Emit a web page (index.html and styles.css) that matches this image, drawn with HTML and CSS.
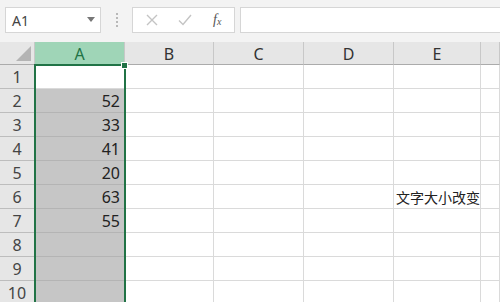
FILE: index.html
```html
<!DOCTYPE html>
<html lang="zh">
<head>
    <meta charset="UTF-8">
    <title>工作表</title>
    <link rel="stylesheet" href="styles.css">
</head>
<body>
    <div class="toolbar">
        <div class="name-box">
            <span>A1</span>
            <svg class="caret" width="8" height="5" viewBox="0 0 8 5"><path d="M0 0h8L4 5z" fill="#777"/></svg>
        </div>
        <div class="grip">
            <span></span><span></span><span></span><span></span>
        </div>
        <div class="fx-buttons">
            <svg width="12" height="12" viewBox="0 0 12 12"><path d="M1 1L11 11M11 1L1 11" stroke="#c4c4c4" stroke-width="1.4"/></svg>
            <svg width="14" height="12" viewBox="0 0 14 12"><path d="M1 6.5L5 10.5L13 1" stroke="#c4c4c4" stroke-width="1.4" fill="none"/></svg>
            <span class="fx">f<sub>x</sub></span>
        </div>
        <div class="formula"></div>
    </div>

    <div class="sheet">
        <div class="corner"><span class="tri"></span></div>
        <div class="col-head active">A</div>
        <div class="col-head">B</div>
        <div class="col-head">C</div>
        <div class="col-head">D</div>
        <div class="col-head">E</div>
        <div class="col-head"></div>

        <div class="row-head">1</div><div class="cell"></div><div class="cell"></div><div class="cell"></div><div class="cell"></div><div class="cell"></div><div class="cell"></div>
        <div class="row-head">2</div><div class="cell sel">52</div><div class="cell"></div><div class="cell"></div><div class="cell"></div><div class="cell"></div><div class="cell"></div>
        <div class="row-head">3</div><div class="cell sel">33</div><div class="cell"></div><div class="cell"></div><div class="cell"></div><div class="cell"></div><div class="cell"></div>
        <div class="row-head">4</div><div class="cell sel">41</div><div class="cell"></div><div class="cell"></div><div class="cell"></div><div class="cell"></div><div class="cell"></div>
        <div class="row-head">5</div><div class="cell sel">20</div><div class="cell"></div><div class="cell"></div><div class="cell"></div><div class="cell"></div><div class="cell"></div>
        <div class="row-head">6</div><div class="cell sel">63</div><div class="cell"></div><div class="cell"></div><div class="cell"></div><div class="cell text">文字大小改变</div><div class="cell"></div>
        <div class="row-head">7</div><div class="cell sel">55</div><div class="cell"></div><div class="cell"></div><div class="cell"></div><div class="cell"></div><div class="cell"></div>
        <div class="row-head">8</div><div class="cell sel"></div><div class="cell"></div><div class="cell"></div><div class="cell"></div><div class="cell"></div><div class="cell"></div>
        <div class="row-head">9</div><div class="cell sel"></div><div class="cell"></div><div class="cell"></div><div class="cell"></div><div class="cell"></div><div class="cell"></div>
        <div class="row-head">10</div><div class="cell sel"></div><div class="cell"></div><div class="cell"></div><div class="cell"></div><div class="cell"></div><div class="cell"></div>

        <!-- 选中列的边框 -->
        <div class="selection"><span class="handle"></span></div>
    </div>
</body>
</html>
```

FILE: styles.css
```css
body {
    margin: 0;
    font-family: "Noto Sans", "Noto Sans CJK SC", sans-serif;
    background-color: #f3f3f3;
    overflow: hidden;
    width: 500px;
    height: 302px;
}
.toolbar {
    display: flex;
    align-items: center;
    height: 42px;
    padding: 0 0 2px 5px;
    box-sizing: border-box;
}
.name-box {
    width: 96px;
    height: 26px;
    box-sizing: border-box;
    background-color: #fff;
    border: 1px solid #d6d6d6;
    display: flex;
    align-items: center;
    justify-content: space-between;
    padding: 0 5px 0 6px;
    font-size: 14px;
    color: #444;
}
.caret {
    margin-bottom: 2px;
}
.grip {
    width: 31px;
    display: flex;
    flex-direction: column;
    align-items: center;
    gap: 2px;
}
.grip span {
    width: 2px;
    height: 2px;
    background-color: #b8b8b8;
}
.fx-buttons {
    width: 103px;
    height: 26px;
    box-sizing: border-box;
    background-color: #fff;
    border: 1px solid #d6d6d6;
    display: flex;
    align-items: center;
    padding: 0 0 0 13px;
    gap: 20px;
}
.fx {
    font-family: "Liberation Serif", serif;
    font-style: italic;
    font-size: 14px;
    color: #555;
    margin-left: 1px;
}
.fx sub {
    font-size: 10px;
    vertical-align: -1px;
}
.formula {
    flex: 1;
    height: 26px;
    margin-left: 5px;
    background-color: #fff;
    border: 1px solid #d6d6d6;
    border-right: none;
    box-sizing: border-box;
}
.sheet {
    position: relative;
    display: grid;
    grid-template-columns: 35px 90px 89px 90px 90px 87px 1fr;
    grid-template-rows: 23px repeat(10, 24px);
    background-color: #fff;
}
.corner {
    background-color: #e6e6e6;
    border-bottom: 1px solid #ababab;
    border-right: 1px solid #c8c8c8;
    position: relative;
}
.tri {
    position: absolute;
    right: 3px;
    bottom: 3px;
    width: 0;
    height: 0;
    border-left: 15px solid transparent;
    border-bottom: 15px solid #b4b4b4;
}
.col-head {
    background-color: #e6e6e6;
    border-bottom: 1px solid #ababab;
    border-right: 1px solid #c8c8c8;
    display: flex;
    align-items: center;
    justify-content: center;
    font-size: 16px;
    color: #333;
    padding-top: 2px;
}
.col-head.active {
    background-color: #9fd5b7;
    color: #217346;
    border-bottom-color: #217346;
}
.row-head {
    background-color: #e6e6e6;
    border-bottom: 1px solid #bdbdbd;
    border-right: 1px solid #ababab;
    display: flex;
    align-items: center;
    justify-content: center;
    font-size: 16px;
    color: #444;
}
.cell {
    border-bottom: 1px solid #dadada;
    border-right: 1px solid #dadada;
    font-size: 16px;
    color: #222;
    display: flex;
    align-items: center;
    justify-content: flex-end;
    padding: 1px 4px 0 0;
}
.cell.sel {
    background-color: #c6c6c6;
    border-bottom-color: #b4b4b4;
}
.cell.text {
    justify-content: flex-start;
    padding: 1px 0 0 2px;
    font-size: 14px;
    white-space: nowrap;
    font-family: "Noto Sans CJK SC", sans-serif;
}
.selection {
    position: absolute;
    left: 34px;
    top: 22px;
    width: 88px;
    height: 240px;
    border: 2px solid #217346;
    border-bottom: none;
    pointer-events: none;
}
.handle {
    position: absolute;
    right: -4px;
    top: -4px;
    width: 5px;
    height: 5px;
    background-color: #217346;
    border: 1px solid #fff;
}
```
